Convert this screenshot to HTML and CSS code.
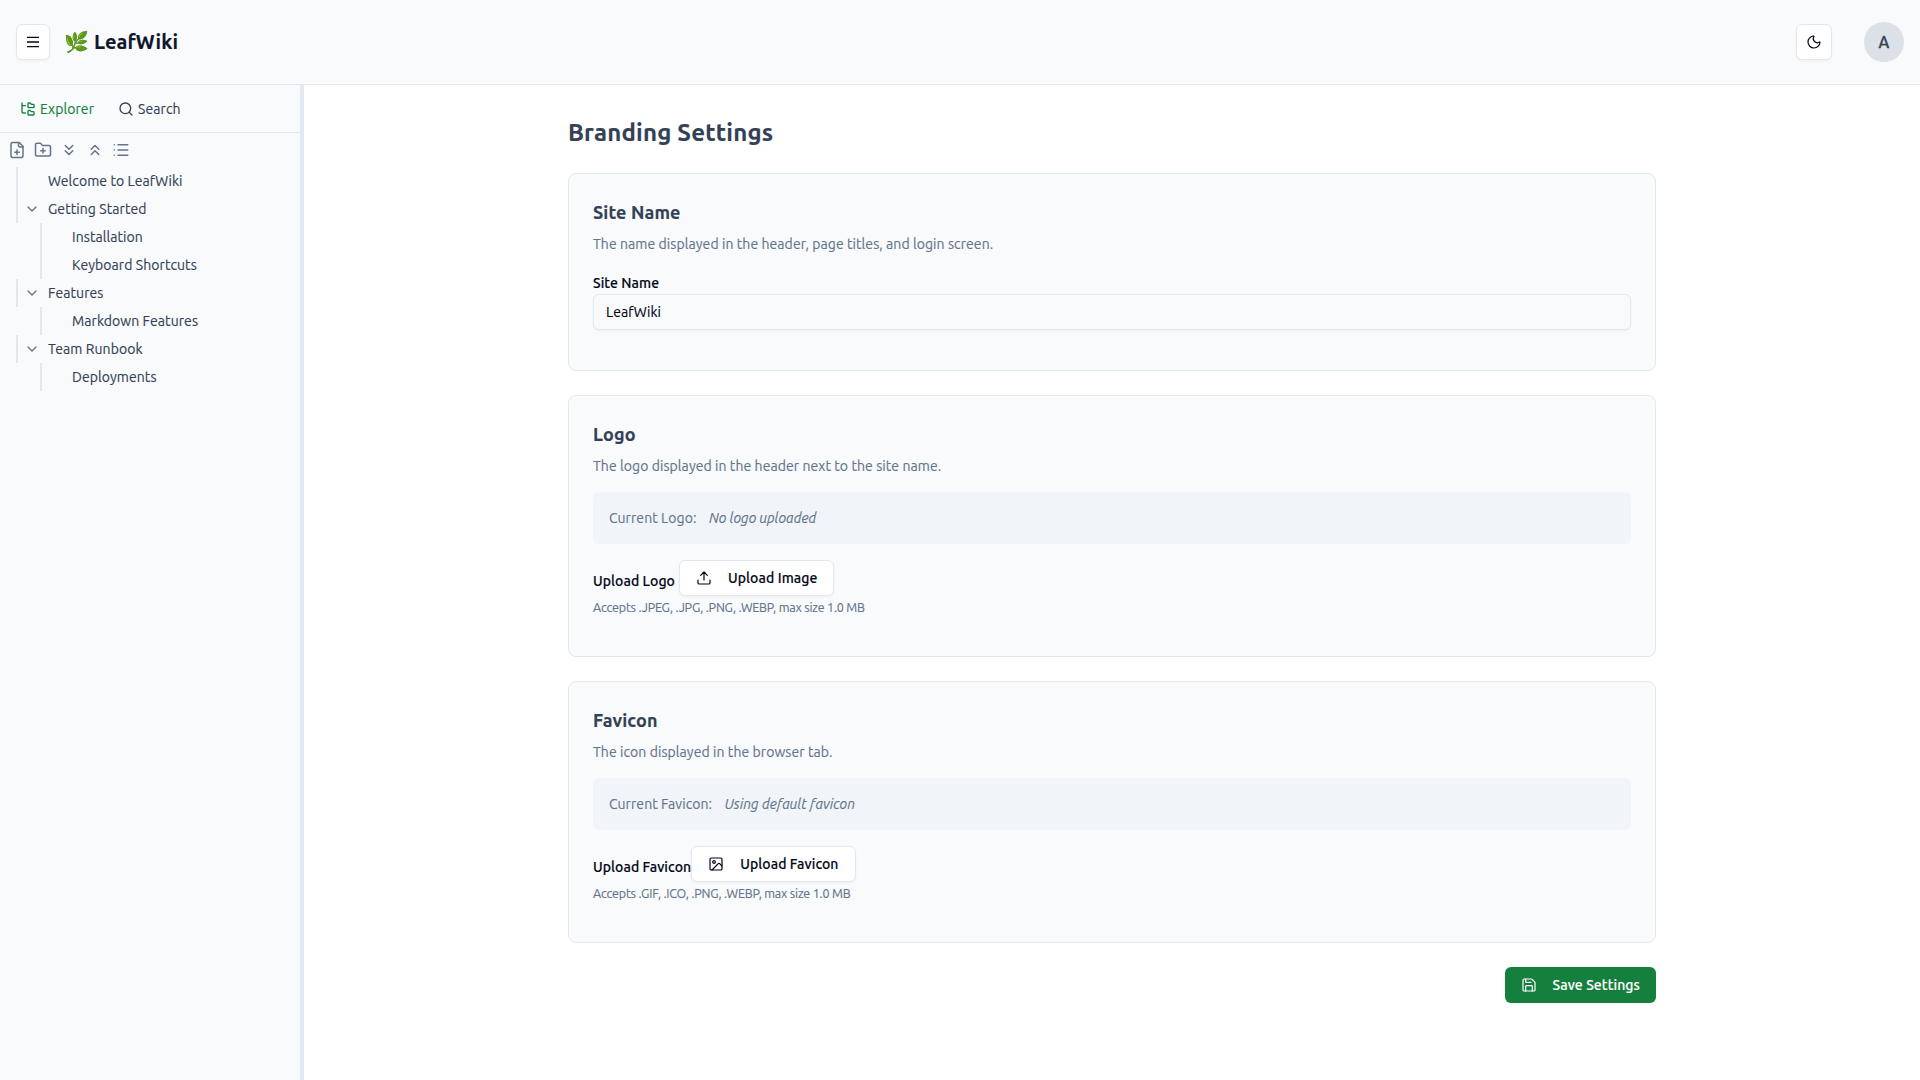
FILE: index.html
```html
<!DOCTYPE html>
<html lang="en">
<head>
    <meta charset="UTF-8" />
    <meta name="viewport" content="width=device-width, initial-scale=1" />
    <title>Branding Settings - LeafWiki</title>
    <link rel="stylesheet" href="styles.css">
</head>
<body>
    <header class="header">
        <button class="btn menu-btn" aria-label="Toggle sidebar">
            <svg class="icon" viewBox="0 0 24 24"><path d="M4 5h16M4 12h16M4 19h16"/></svg>
        </button>
        <h1 class="brand">🌿 LeafWiki</h1>
        <div class="header-right">
            <button class="btn theme-btn" aria-label="Toggle theme">
                <svg class="icon" viewBox="0 0 24 24"><path d="M20.985 12.486a9 9 0 1 1-9.473-9.472c.405-.022.617.46.402.803a6 6 0 0 0 8.268 8.268c.344-.215.825-.004.803.401"/></svg>
            </button>
            <div class="avatar">A</div>
        </div>
    </header>

    <div class="layout">
        <aside class="sidebar">
            <nav class="tabs">
                <a class="tab active">
                    <svg class="icon" viewBox="0 0 24 24"><path d="M20 10a1 1 0 0 0 1-1V6a1 1 0 0 0-1-1h-2.5a1 1 0 0 1-.8-.4l-.9-1.2A1 1 0 0 0 15 3h-2a1 1 0 0 0-1 1v5a1 1 0 0 0 1 1Z"/><path d="M20 21a1 1 0 0 0 1-1v-3a1 1 0 0 0-1-1h-2.9a1 1 0 0 1-.88-.55l-.42-.85a1 1 0 0 0-.92-.6H13a1 1 0 0 0-1 1v5a1 1 0 0 0 1 1Z"/><path d="M3 5a2 2 0 0 0 2 2h3M3 3v13a2 2 0 0 0 2 2h3"/></svg>
                    Explorer
                </a>
                <a class="tab">
                    <svg class="icon" viewBox="0 0 24 24"><circle cx="11" cy="11" r="8"/><path d="m21 21-4.3-4.3"/></svg>
                    Search
                </a>
            </nav>

            <div class="toolbar">
                <svg class="icon" viewBox="0 0 24 24"><path d="M15 2H6a2 2 0 0 0-2 2v16a2 2 0 0 0 2 2h12a2 2 0 0 0 2-2V7Z"/><path d="M14 2v4a2 2 0 0 0 2 2h4M9 15h6M12 18v-6"/></svg>
                <svg class="icon" viewBox="0 0 24 24"><path d="M12 10v6M9 13h6"/><path d="M20 20a2 2 0 0 0 2-2V8a2 2 0 0 0-2-2h-7.9a2 2 0 0 1-1.69-.9L9.6 3.9A2 2 0 0 0 7.93 3H4a2 2 0 0 0-2 2v13a2 2 0 0 0 2 2Z"/></svg>
                <svg class="icon" viewBox="0 0 24 24"><path d="m7 6 5 5 5-5M7 13l5 5 5-5"/></svg>
                <svg class="icon" viewBox="0 0 24 24"><path d="m17 11-5-5-5 5M17 18l-5-5-5 5"/></svg>
                <svg class="icon" viewBox="0 0 24 24"><path d="M3 5h.01M3 12h.01M3 19h.01M8 5h13M8 12h13M8 19h13"/></svg>
            </div>

            <div class="tree">
                <div class="node"><span class="chevron"></span>Welcome to LeafWiki</div>
                <div class="node"><svg class="icon chevron" viewBox="0 0 24 24"><path d="m6 9 6 6 6-6"/></svg>Getting Started</div>
                <div class="node child">Installation</div>
                <div class="node child">Keyboard Shortcuts</div>
                <div class="node"><svg class="icon chevron" viewBox="0 0 24 24"><path d="m6 9 6 6 6-6"/></svg>Features</div>
                <div class="node child">Markdown Features</div>
                <div class="node"><svg class="icon chevron" viewBox="0 0 24 24"><path d="m6 9 6 6 6-6"/></svg>Team Runbook</div>
                <div class="node child">Deployments</div>
            </div>
        </aside>
        <div class="resizer"></div>

        <main class="content">
            <div class="settings">
                <h1 class="page-title">Branding Settings</h1>

                <section class="card">
                    <h2>Site Name</h2>
                    <p class="description">The name displayed in the header, page titles, and login screen.</p>
                    <label class="label field-label" for="site-name">Site Name</label>
                    <input class="input" type="text" id="site-name" value="LeafWiki" />
                </section>

                <section class="card">
                    <h2>Logo</h2>
                    <p class="description">The logo displayed in the header next to the site name.</p>
                    <div class="current">Current Logo: <em>No logo uploaded</em></div>
                    <div class="upload">
                        <span class="label">Upload Logo</span>
                        <button class="btn upload-logo">
                            <svg class="icon" viewBox="0 0 24 24"><path d="M12 3v12M17 8l-5-5-5 5M21 15v4a2 2 0 0 1-2 2H5a2 2 0 0 1-2-2v-4"/></svg>
                            Upload Image
                        </button>
                    </div>
                    <p class="hint">Accepts .JPEG, .JPG, .PNG, .WEBP, max size 1.0 MB</p>
                </section>

                <section class="card">
                    <h2>Favicon</h2>
                    <p class="description">The icon displayed in the browser tab.</p>
                    <div class="current">Current Favicon: <em>Using default favicon</em></div>
                    <div class="upload">
                        <span class="label">Upload Favicon</span>
                        <button class="btn">
                            <svg class="icon" viewBox="0 0 24 24"><rect width="18" height="18" x="3" y="3" rx="2"/><circle cx="9" cy="9" r="2"/><path d="m21 15-3.086-3.086a2 2 0 0 0-2.828 0L6 21"/></svg>
                            Upload Favicon
                        </button>
                    </div>
                    <p class="hint">Accepts .GIF, .ICO, .PNG, .WEBP, max size 1.0 MB</p>
                </section>

                <div class="actions">
                    <button class="btn save-btn">
                        <svg class="icon" viewBox="0 0 24 24"><path d="M15.2 3a2 2 0 0 1 1.4.6l3.8 3.8a2 2 0 0 1 .6 1.4V19a2 2 0 0 1-2 2H5a2 2 0 0 1-2-2V5a2 2 0 0 1 2-2z"/><path d="M17 21v-7a1 1 0 0 0-1-1H8a1 1 0 0 0-1 1v7M7 3v4a1 1 0 0 0 1 1h7"/></svg>
                        Save Settings
                    </button>
                </div>
            </div>
        </main>
    </div>
</body>
</html>
```
FILE: styles.css
```css
* { box-sizing: border-box; }
body { margin: 0; height: 100vh; display: flex; flex-direction: column; overflow: hidden; font-family: Ubuntu, "Noto Sans", sans-serif; font-size: 14px; line-height: 20px; letter-spacing: 0.075px; color: #020617; background: #fff; -webkit-text-stroke: 0.15px; }
h1, h2, p { margin: 0; }
.icon { width: 16px; height: 16px; flex: none; fill: none; stroke: currentColor; stroke-width: 2; stroke-linecap: round; stroke-linejoin: round; }

.btn { display: flex; align-items: center; gap: 16px; height: 36px; padding: 0 16px; border: 1px solid #e2e8f0; border-radius: 6px; background: #fff; color: #020617; font: 500 14px/20px Ubuntu, "Noto Sans", sans-serif; letter-spacing: 0.09px; white-space: nowrap; box-shadow: 0 1px 2px rgba(0,0,0,0.05); }
.btn .icon { stroke-width: 1.8; }

.header { display: flex; align-items: center; height: 85px; padding: 0 16px; border-bottom: 1px solid #e2e8f0; background: #f8fafc; }
.menu-btn { width: 34px; padding: 0; justify-content: center; }
.menu-btn .icon { stroke-width: 2; stroke-linecap: square; }
.brand { margin-left: 14px; font-size: 20px; line-height: 28px; font-weight: 700; color: #0f172a; }
.header-right { display: flex; align-items: center; gap: 32px; margin-left: auto; }
.theme-btn { width: 36px; padding: 0; justify-content: center; }
.avatar { width: 40px; height: 40px; border-radius: 50%; background: #dce1e8; color: #334155; font-size: 16px; font-weight: 500; line-height: 40px; text-align: center; -webkit-text-stroke: 0.3px #334155; }

.layout { flex: 1; display: flex; min-height: 0; }
.sidebar { width: 300px; background: #f8fafc; }
.resizer { width: 4px; background: #e2e8f0; }
.tabs { display: flex; gap: 24px; height: 48px; padding: 0 20px; border-bottom: 1px solid #e2e8f0; }
.tab { display: flex; align-items: center; gap: 4px; color: #334155; }
.tab.active { color: #15803d; }
.toolbar { display: flex; align-items: center; gap: 8px; height: 34px; padding: 0 8px; color: #64748b; }
.toolbar .icon { width: 18px; height: 18px; }

.node { display: flex; align-items: center; height: 28px; margin-left: 16px; border-left: 2px solid #e2e8f0; color: #334155; }
.node.child { margin-left: 40px; padding-left: 30px; }
.chevron { width: 16px; margin: 0 8px 0 6px; color: #64748b; }

.content { flex: 1; padding-top: 32px; }
.settings { width: 1088px; margin: 0 auto; }
.page-title { margin-bottom: 24px; font-size: 24px; line-height: 32px; font-weight: 700; letter-spacing: 0.2px; color: #334155; }
.card { margin-bottom: 24px; padding: 24px 24px 40px; border: 1px solid #e2e8f0; border-radius: 8px; background: #f8fafc; }
.card h2 { margin-bottom: 8px; font-size: 18px; line-height: 28px; font-weight: 700; letter-spacing: 0.12px; color: #334155; }
.description { margin-bottom: 16px; color: #64748b; }
.label { font-weight: 500; }
.field-label { display: block; padding-top: 2px; line-height: 22px; }
.input { display: block; width: 100%; height: 36px; padding: 0 12px; border: 1px solid #e2e8f0; border-radius: 6px; background: #f8fafc; color: #020617; font: 14px Ubuntu, "Noto Sans", sans-serif; letter-spacing: 0.075px; box-shadow: 0 1px 2px rgba(0,0,0,0.05); }
.current { display: flex; gap: 12.5px; margin-bottom: 16px; padding: 16px; border-radius: 6px; background: #f1f5f9; color: #64748b; }
.current em { letter-spacing: 0.03px; }
.upload { display: flex; align-items: center; margin-bottom: 3px; }
.upload .label { padding-top: 6px; white-space: nowrap; }
.upload-logo { margin-left: 4px; }
.hint { padding-bottom: 1px; font-size: 12.5px; line-height: 16px; letter-spacing: -0.2px; color: #64748b; }
.actions { display: flex; justify-content: flex-end; }
.save-btn { border: none; background: #15803d; color: #fff; }
```
